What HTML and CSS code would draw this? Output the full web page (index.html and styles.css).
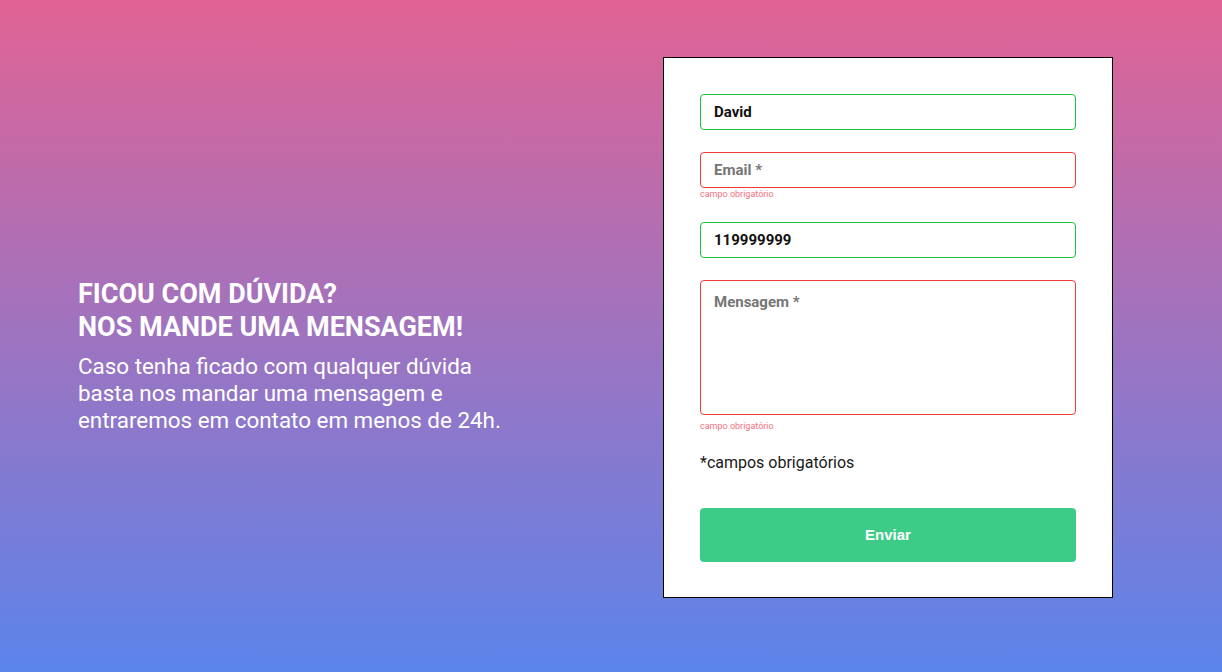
FILE: index.html
```html
<!DOCTYPE html>
<html lang="pt-BR">
<head>
<meta charset="utf-8">
<title>Contato</title>
<link rel="stylesheet" href="styles.css">
</head>
<body>
<main class="page">
  <section class="intro">
    <h2 class="intro-title">FICOU COM DÚVIDA?<br>NOS MANDE UMA MENSAGEM!</h2>
    <p class="intro-text">Caso tenha ficado com qualquer dúvida basta nos mandar uma mensagem e entraremos em contato em menos de 24h.</p>
  </section>
  <form class="card">
    <div class="field">
      <input class="input input-ok" type="text" value="David" placeholder="Nome *">
    </div>
    <div class="field">
      <input class="input input-error" type="email" placeholder="Email *">
      <span class="error">campo obrigatório</span>
    </div>
    <div class="field">
      <input class="input input-ok" type="text" value="119999999" placeholder="Telefone">
    </div>
    <div class="field field-message">
      <textarea class="input textarea input-error" placeholder="Mensagem *"></textarea>
      <span class="error error-message">campo obrigatório</span>
    </div>
    <p class="required-note">*campos obrigatórios</p>
    <button class="submit" type="button">Enviar</button>
  </form>
</main>
</body>
</html>
```
FILE: styles.css
```css
* { box-sizing: border-box; }
html, body { margin: 0; padding: 0; }
body {
  height: 672px;
  background: linear-gradient(180deg, #e16394 0%, #5b84eb 100%);
  font-family: Roboto, "Liberation Sans", sans-serif;
  overflow: hidden;
}
.page {
  height: 672px;
  display: flex;
  align-items: center;
  padding: 0 109px 18px 78px;
}
.intro {
  width: 440px;
  margin-top: 58px;
  color: #fff;
}
.intro-title {
  margin: 0 0 9px;
  font-size: 27px;
  line-height: 33px;
  font-weight: 700;
}
.intro-text {
  margin: 0;
  font-size: 22.4px;
  line-height: 26.7px;
  font-weight: 400;
}
.card {
  margin-left: auto;
  width: 450px;
  background: #fff;
  border: 1px solid #000;
  padding: 36px 36px 35px;
  display: flex;
  flex-direction: column;
}
.field {
  display: flex;
  flex-direction: column;
  margin-bottom: 22px;
}
.field-message { margin-bottom: 17px; }
.input {
  width: 100%;
  height: 36px;
  border-radius: 4px;
  border: 1px solid #22c33c;
  padding: 0 13px;
  font-family: Roboto, "Liberation Sans", sans-serif;
  font-size: 15px;
  font-weight: 700;
  color: #111;
  background: #fff;
  outline: none;
}
.input::placeholder { color: #757575; opacity: 1; }
.input-ok { border-color: #22c33c; }
.input-error { border-color: #f03a3a; }
.textarea {
  height: 135px;
  resize: none;
  padding: 12px 13px;
  line-height: 18px;
  display: block;
}
.error {
  font-size: 9px;
  line-height: 12px;
  height: 12px;
  color: #f0707f;
}
.error-message { margin-top: 5px; }
.required-note {
  margin: 4px 0 0;
  font-size: 16px;
  line-height: 19px;
  color: #1a1a1a;
}
.submit {
  margin-top: 36px;
  height: 54px;
  width: 100%;
  border: none;
  border-radius: 4px;
  background: #3ccc88;
  color: #fff;
  font-family: "Liberation Sans", Arial, sans-serif;
  font-size: 15px;
  font-weight: 700;
  cursor: pointer;
}
```
